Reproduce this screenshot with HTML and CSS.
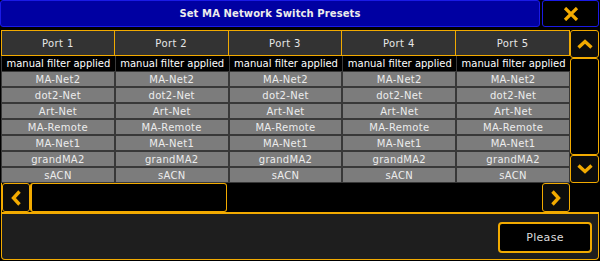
FILE: index.html
```html
<!DOCTYPE html>
<html>
<head>
<meta charset="utf-8">
<link rel="stylesheet" href="styles.css">
</head>
<body>
<div class="titlebar">
  <div class="title">Set MA Network Switch Presets</div>
  <div class="close">
    <svg width="16" height="14" viewBox="0 0 16 14"><path d="M2 1 L14 13 M14 1 L2 13" stroke="#f2aa00" stroke-width="3.2" fill="none"/></svg>
  </div>
</div>
<div class="frame">
  <div class="upper">
    <div class="table">
      <div class="hcell">Port 1</div><div class="hcell">Port 2</div><div class="hcell">Port 3</div><div class="hcell">Port 4</div><div class="hcell">Port 5</div>
      <div class="mcell">manual filter applied</div><div class="mcell">manual filter applied</div><div class="mcell">manual filter applied</div><div class="mcell">manual filter applied</div><div class="mcell">manual filter applied</div>
      <div class="cell">MA-Net2</div><div class="cell">MA-Net2</div><div class="cell">MA-Net2</div><div class="cell">MA-Net2</div><div class="cell">MA-Net2</div>
      <div class="cell">dot2-Net</div><div class="cell">dot2-Net</div><div class="cell">dot2-Net</div><div class="cell">dot2-Net</div><div class="cell">dot2-Net</div>
      <div class="cell">Art-Net</div><div class="cell">Art-Net</div><div class="cell">Art-Net</div><div class="cell">Art-Net</div><div class="cell">Art-Net</div>
      <div class="cell">MA-Remote</div><div class="cell">MA-Remote</div><div class="cell">MA-Remote</div><div class="cell">MA-Remote</div><div class="cell">MA-Remote</div>
      <div class="cell">MA-Net1</div><div class="cell">MA-Net1</div><div class="cell">MA-Net1</div><div class="cell">MA-Net1</div><div class="cell">MA-Net1</div>
      <div class="cell">grandMA2</div><div class="cell">grandMA2</div><div class="cell">grandMA2</div><div class="cell">grandMA2</div><div class="cell">grandMA2</div>
      <div class="cell">sACN</div><div class="cell">sACN</div><div class="cell">sACN</div><div class="cell">sACN</div><div class="cell">sACN</div>
    </div>
    <div class="vscroll">
      <div class="sbtn up"><svg width="16" height="10" viewBox="0 0 16 10"><path d="M1.5 8.5 L8 2.5 L14.5 8.5" stroke="#f2aa00" stroke-width="3.4" fill="none"/></svg></div>
      <div class="vtrack"></div>
      <div class="sbtn down"><svg width="16" height="10" viewBox="0 0 16 10"><path d="M1.5 1.5 L8 7.5 L14.5 1.5" stroke="#f2aa00" stroke-width="3.4" fill="none"/></svg></div>
    </div>
  </div>
  <div class="hscroll">
    <div class="hbtn"><svg width="10" height="16" viewBox="0 0 10 16"><path d="M8.5 1.5 L2.5 8 L8.5 14.5" stroke="#f2aa00" stroke-width="3.4" fill="none"/></svg></div>
    <div class="thumb"></div>
    <div class="htrack"></div>
    <div class="hbtn"><svg width="10" height="16" viewBox="0 0 10 16"><path d="M1.5 1.5 L7.5 8 L1.5 14.5" stroke="#f2aa00" stroke-width="3.4" fill="none"/></svg></div>
    <div class="corner"></div>
  </div>
  <div class="bottom">
    <div class="please">Please</div>
  </div>
</div>
</body>
</html>
```
FILE: styles.css
```css
html, body {
  margin: 0;
  padding: 0;
  background: #000;
  font-family: "DejaVu Sans", sans-serif;
  font-size: 10px;
  color: #e6e6e6;
}
body {
  width: 600px;
  height: 261px;
  overflow: hidden;
}
.titlebar {
  display: flex;
  height: 27px;
  gap: 2px;
  padding: 0 1px 0 0;
}
.title {
  width: 540px;
  box-sizing: border-box;
  background: #0000a2;
  border: 1px solid #1a1ae6;
  border-radius: 3px;
  display: flex;
  align-items: center;
  justify-content: center;
  font-weight: bold;
  color: #ececec;
  letter-spacing: 0.1px;
}
.close {
  flex: 1;
  box-sizing: border-box;
  background: #000;
  border: 1px solid #1a1ae6;
  border-radius: 3px;
  display: flex;
  align-items: center;
  justify-content: center;
}
.frame {
  margin: 3px 1px 0 1px;
  display: flex;
  flex-direction: column;
}
.upper {
  display: flex;
}
.table {
  width: 569px;
  display: grid;
  grid-template-columns: repeat(5, 1fr);
  grid-template-rows: 26px 15px repeat(7, 16px);
}
.hcell {
  box-sizing: border-box;
  background: #333;
  border: 1px solid #f2aa00;
  margin-left: -1px;
  display: flex;
  align-items: center;
  justify-content: center;
  letter-spacing: 0.4px;
}
.hcell:first-child { margin-left: 0; }
.mcell {
  box-sizing: border-box;
  background: #000;
  color: #fff;
  border-left: 1px solid #3a3a3a;
  display: flex;
  align-items: center;
  justify-content: center;
  white-space: nowrap;
}
.cell {
  box-sizing: border-box;
  background: #7c7c7c;
  border: 1px solid #383838;
  display: flex;
  align-items: center;
  justify-content: center;
  color: #ececec;
  letter-spacing: 0.3px;
}
.vscroll {
  width: 29px;
  display: flex;
  flex-direction: column;
}
.sbtn {
  height: 28px;
  box-sizing: border-box;
  border: 1px solid #f2aa00;
  border-radius: 3px;
  background: #0c0c0c;
  display: flex;
  align-items: center;
  justify-content: center;
}
.vtrack {
  flex: 1;
  box-sizing: border-box;
  border: 1px solid #f2aa00;
  border-radius: 3px;
  background: #000;
}
.hscroll {
  display: flex;
  height: 29px;
  box-sizing: border-box;
  border-left: 1px solid #f2aa00;
}
.hbtn {
  width: 28px;
  box-sizing: border-box;
  border: 1px solid #f2aa00;
  border-radius: 3px;
  background: #0c0c0c;
  display: flex;
  align-items: center;
  justify-content: center;
}
.thumb {
  width: 197px;
  box-sizing: border-box;
  border: 1px solid #f2aa00;
  border-left-width: 2px;
  border-radius: 3px;
  background: #000;
}
.htrack {
  flex: 1;
  background: #000;
}
.corner {
  width: 29px;
  background: #000;
}
.bottom {
  height: 48px;
  box-sizing: border-box;
  background: #1e1e1e;
  border: 1px solid #f2aa00;
  border-top-width: 2px;
  border-radius: 0 0 4px 4px;
  display: flex;
  justify-content: flex-end;
  align-items: flex-start;
  padding: 8px 6px 0 0;
}
.please {
  width: 94px;
  height: 31px;
  box-sizing: border-box;
  background: #000;
  border: 2px solid #f2aa00;
  border-radius: 4px;
  display: flex;
  align-items: center;
  justify-content: center;
  font-size: 11px;
  color: #dcdcdc;
  letter-spacing: 0.3px;
}
```
